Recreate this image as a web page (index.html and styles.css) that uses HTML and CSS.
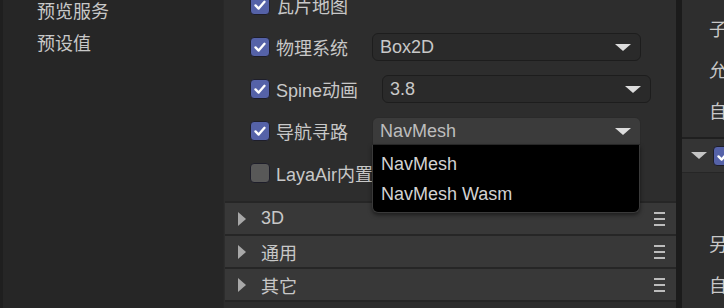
FILE: index.html
```html
<!DOCTYPE html>
<html lang="zh-CN">
<head>
  <meta charset="UTF-8" />
  <meta name="viewport" content="width=device-width, initial-scale=1.0" />
  <title>项目设置</title>
  <link rel="stylesheet" href="styles.css">
</head>
<body>
  <div class="app">
    <aside class="sidebar">
      <div class="nav-item">预览服务</div>
      <div class="nav-item">预设值</div>
    </aside>

    <main class="settings">
      <div class="options">
        <div class="option">
          <span class="check on"><svg viewBox="0 0 20 20"><polyline points="5,10.5 8.5,14 15,6.5" /></svg></span>
          <span class="label">瓦片地图</span>
        </div>
        <div class="option">
          <span class="check on"><svg viewBox="0 0 20 20"><polyline points="5,10.5 8.5,14 15,6.5" /></svg></span>
          <span class="label">物理系统</span>
          <div class="select">Box2D<span class="arrow"></span></div>
        </div>
        <div class="option">
          <span class="check on"><svg viewBox="0 0 20 20"><polyline points="5,10.5 8.5,14 15,6.5" /></svg></span>
          <span class="label">Spine动画</span>
          <div class="select">3.8<span class="arrow"></span></div>
        </div>
        <div class="option">
          <span class="check on"><svg viewBox="0 0 20 20"><polyline points="5,10.5 8.5,14 15,6.5" /></svg></span>
          <span class="label">导航寻路</span>
          <div class="select open">NavMesh<span class="arrow"></span>
            <div class="popup">
              <div class="popup-item">NavMesh</div>
              <div class="popup-item">NavMesh Wasm</div>
            </div>
          </div>
        </div>
        <div class="option">
          <span class="check"></span>
          <span class="label">LayaAir内置</span>
        </div>
      </div>

      <div class="sections">
        <div class="section"><span class="caret"></span><span class="section-title">3D</span><span class="menu"><i></i><i></i><i></i></span></div>
        <div class="section"><span class="caret"></span><span class="section-title">通用</span><span class="menu"><i></i><i></i><i></i></span></div>
        <div class="section"><span class="caret"></span><span class="section-title">其它</span><span class="menu"><i></i><i></i><i></i></span></div>
      </div>
    </main>

    <div class="divider"></div>

    <aside class="inspector">
      <div class="prop-list">
        <div class="prop">子</div>
        <div class="prop">允</div>
        <div class="prop">自</div>
      </div>
      <div class="group-head">
        <span class="caret-down"></span>
        <span class="check on"><svg viewBox="0 0 20 20"><polyline points="5,10.5 8.5,14 15,6.5" /></svg></span>
      </div>
      <div class="prop-list lower">
        <div class="prop">另</div>
        <div class="prop">自</div>
      </div>
    </aside>
  </div>
</body>
</html>
```

FILE: styles.css
```css
body {
  margin: 0;
  padding: 0;
  background-color: #2d2d2d;
  color: #c8c8c8;
  font-family: "Liberation Sans", "Noto Sans CJK SC", sans-serif;
  font-size: 18px;
  overflow: hidden;
}

.app {
  display: flex;
  height: 308px;
  overflow: hidden;
}

/* left navigation */
.sidebar {
  width: 186px;
  flex-shrink: 0;
  background-color: #262626;
  border-left: 3px solid #1f1f1f;
  padding-left: 34px;
}

.nav-item {
  height: 32px;
  line-height: 32px;
  white-space: nowrap;
}

.nav-item:first-child {
  margin-top: -4px;
}

/* main settings column */
.settings {
  width: 452px;
  flex-shrink: 0;
  background-color: #2d2d2d;
  border-left: 1px solid #282828;
}

.options {
  margin-top: -16px;
  padding-left: 26px;
}

.option {
  display: flex;
  align-items: center;
  height: 42px;
  white-space: nowrap;
}

.check {
  width: 18px;
  height: 18px;
  flex-shrink: 0;
  border: 1px solid #1e1e2a;
  border-radius: 4px;
  background-color: #585858;
  display: flex;
  align-items: center;
  justify-content: center;
}

.check.on {
  background-color: #5562a8;
}

.check svg {
  width: 18px;
  height: 18px;
}

.check polyline {
  fill: none;
  stroke: #fff;
  stroke-width: 2.6;
  stroke-linecap: round;
  stroke-linejoin: round;
}

.label {
  margin-left: 6px;
}

.select {
  position: relative;
  width: 260px;
  height: 26px;
  line-height: 26px;
  margin-left: 24px;
  padding-left: 7px;
  background-color: #2a2a2a;
  border: 1px solid #1d1d1d;
  border-radius: 6px;
  color: #c8c8c8;
}

.arrow {
  position: absolute;
  right: 9px;
  top: 10px;
  width: 0;
  height: 0;
  border-left: 8px solid transparent;
  border-right: 8px solid transparent;
  border-top: 7px solid #dcdcdc;
}

.select.open {
  background-color: #3b3b3b;
  border-color: #2a2a2a;
  border-radius: 6px 6px 0 0;
  color: #bdbdbd;
}

.popup {
  position: absolute;
  top: 27px;
  left: -1px;
  width: 266px;
  height: 63px;
  padding-top: 4px;
  background-color: #000;
  border: 1px solid #3a3a3a;
  border-top: none;
  border-radius: 0 0 6px 6px;
  box-shadow: 0 2px 4px rgba(0, 0, 0, 0.5);
  z-index: 5;
}

.popup-item {
  height: 30px;
  line-height: 30px;
  padding-left: 8px;
  color: #d2d2d2;
}

/* collapsible groups */
.sections {
  margin-top: 7px;
  margin-left: 1px;
}

.section {
  display: flex;
  align-items: center;
  height: 31px;
  border-top: 2px solid #262626;
  background-color: #383838;
  padding-left: 13px;
  padding-right: 11px;
}

.section:last-child {
  border-bottom: 2px solid #262626;
}

.caret {
  width: 0;
  height: 0;
  border-top: 7px solid transparent;
  border-bottom: 7px solid transparent;
  border-left: 8px solid #a8a8a8;
}

.section-title {
  margin-left: 15px;
  flex: 1;
}

.menu {
  display: flex;
  flex-direction: column;
  gap: 4px;
}

.menu i {
  display: block;
  width: 11px;
  height: 2px;
  background-color: #bcbcbc;
}

.divider {
  width: 6px;
  flex-shrink: 0;
  background-color: #1b1b1b;
}

/* right inspector */
.inspector {
  flex: 1;
  min-width: 0;
  background-color: #2e2e2e;
  overflow: hidden;
}

.prop-list {
  padding-top: 10px;
  padding-left: 27px;
}

.prop-list.lower {
  padding-top: 52px;
}

.prop {
  height: 41px;
  line-height: 41px;
  white-space: nowrap;
}

.group-head {
  display: flex;
  align-items: center;
  height: 33px;
  margin-top: 4px;
  border-top: 2px solid #1f1f1f;
  border-bottom: 1px solid #262626;
  background-color: #343434;
  padding-left: 9px;
}

.caret-down {
  width: 0;
  height: 0;
  border-left: 8px solid transparent;
  border-right: 8px solid transparent;
  border-top: 7px solid #c4c4c4;
}

.group-head .check {
  margin-left: 6px;
}
```
